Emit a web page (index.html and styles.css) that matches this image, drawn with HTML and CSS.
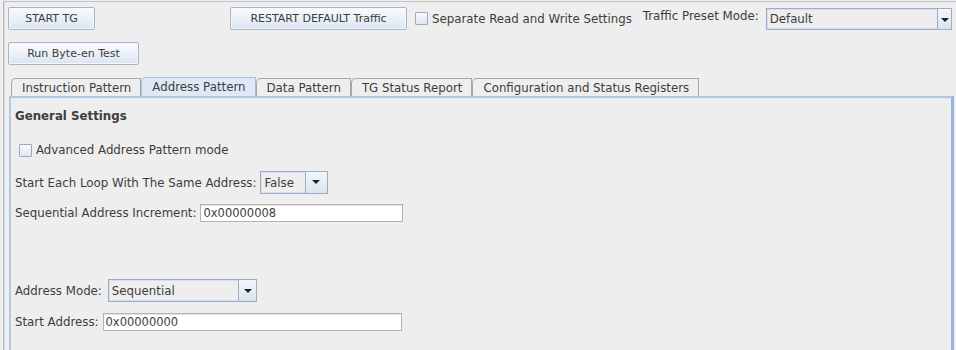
FILE: index.html
```html
<!DOCTYPE html>
<html>
<head>
<meta charset="utf-8">
<link rel="stylesheet" href="styles.css">
</head>
<body>
<div class="frame">
  <div class="toolbar">
    <button class="btn btn-start">START TG</button>
    <button class="btn btn-restart">RESTART DEFAULT Traffic</button>
    <label class="check top-check"><span class="box"></span>Separate Read and Write Settings</label>
    <span class="preset-label">Traffic Preset Mode:</span>
    <div class="combo combo-preset"><span class="combo-text">Default</span><span class="arrow"></span></div>
  </div>
  <div class="toolbar2">
    <button class="btn btn-byte">Run Byte-en Test</button>
  </div>
  <div class="tabs">
    <div class="tab first">Instruction Pattern</div>
    <div class="tab active">Address Pattern</div>
    <div class="tab">Data Pattern</div>
    <div class="tab">TG Status Report</div>
    <div class="tab">Configuration and Status Registers</div>
  </div>
  <div class="panel">
    <div class="heading">General Settings</div>
    <label class="check adv-check"><span class="box"></span>Advanced Address Pattern mode</label>
    <div class="row row-loop">
      <span class="lbl">Start Each Loop With The Same Address:</span>
      <div class="combo combo-false"><span class="combo-text">False</span><span class="arrow"></span></div>
    </div>
    <div class="row row-inc">
      <span class="lbl">Sequential Address Increment:</span>
      <div class="field field-inc">0x00000008</div>
    </div>
    <div class="row row-mode">
      <span class="lbl">Address Mode:</span>
      <div class="combo combo-mode"><span class="combo-text">Sequential</span><span class="arrow"></span></div>
    </div>
    <div class="row row-start">
      <span class="lbl">Start Address:</span>
      <div class="field field-start">0x00000000</div>
    </div>
  </div>
</div>
</body>
</html>
```

FILE: styles.css
```css
* { box-sizing: border-box; }
html, body {
  margin: 0;
  padding: 0;
  background: #eeeeee;
  width: 956px;
  height: 350px;
  overflow: hidden;
  font-family: "DejaVu Sans", sans-serif;
  font-size: 11.8px;
  color: #3d3d3d;
}
.frame {
  margin: 1px 0 0 3px;
  border-top: 1px solid #c4c4c4;
  border-left: 1px solid #b8b8b8;
  box-shadow: inset 1px 0 0 #dcdcdc;
  height: 349px;
  padding: 5px 0 0 4px;
}
.toolbar {
  display: flex;
  align-items: center;
  height: 23px;
  white-space: nowrap;
}
.btn {
  font-family: "DejaVu Sans", sans-serif;
  font-size: 11px;
  color: #3d3d3d;
  height: 23px;
  padding: 0;
  border: 1px solid #a3b5cb;
  border-radius: 2px;
  background: linear-gradient(#fbfcfd, #dae5f1);
  box-shadow: inset 0 0 0 1px #f4f7fb;
}
.btn-start { width: 87px; }
.btn-restart { width: 177px; margin-left: 135px; }
.btn-byte { width: 131px; }
.check {
  display: flex;
  align-items: center;
  white-space: nowrap;
}
.box {
  width: 13px;
  height: 13px;
  border: 1px solid #9aabc0;
  background: linear-gradient(#f7f9fc, #dfe7f0);
  margin-right: 4px;
  border-radius: 1px;
}
.top-check { margin-left: 8px; }
.preset-label {
  margin-left: 11px;
  position: relative;
  top: -3px;
}
.combo {
  display: flex;
  height: 22px;
  border: 1px solid #98adc6;
  background: #eeeeee;
}
.combo-text {
  flex: 1;
  padding-left: 2px;
  display: flex;
  align-items: center;
  border: 1px solid #d6e0ec;
  border-right: none;
  background: #eeeeee;
}
.arrow {
  width: 14px;
  border-left: 1px solid #98adc6;
  background: linear-gradient(#f4f7fb, #d9e4f0);
  position: relative;
}
.arrow::after {
  content: "";
  position: absolute;
  left: 3px;
  top: 9px;
  border-left: 4px solid transparent;
  border-right: 4px solid transparent;
  border-top: 4px solid #222;
}
.combo-preset { width: 186px; margin-left: 7px; }
.toolbar2 {
  margin-top: 12px;
  height: 23px;
}
.tabs {
  display: flex;
  margin-top: 13px;
  margin-left: 3px;
  height: 18px;
  align-items: flex-end;
}
.tab {
  height: 18px;
  padding: 0 9px 0 10px;
  border: 1px solid #a6a6a6;
  border-bottom: none;
  border-radius: 5px 0 0 0;
  background: #eeeeee;
  font-size: 11.8px;
  line-height: 18px;
  color: #3d3d3d;
  margin-right: 0;
  white-space: nowrap;
}
.tab.active {
  background: #dfe8f4;
  border-color: #a9bddb;
  height: 19px;
}
.panel {
  margin-left: 1px;
  width: 945px;
  height: 260px;
  border: 2px solid #b3c7e6;
  border-right: 3px solid #9ab5e0;
  border-bottom: none;
  box-shadow: inset 0 1px 0 #dfe8f4;
  padding: 8px 0 0 4px;
}
.heading {
  font-weight: bold;
  height: 20px;
  line-height: 20px;
}
.adv-check {
  margin-top: 15px;
  margin-left: 4px;
  height: 18px;
}
.row {
  display: flex;
  align-items: center;
  white-space: nowrap;
}
.lbl { margin-right: 4px; }
.row-loop { margin-top: 12px; height: 23px; }
.combo-false { width: 68px; height: 23px; margin-left: 0; }
.combo-false .arrow { width: 22px; }
.combo-false .arrow::after { left: 6px; top: 8px; }
.field {
  height: 18px;
  border: 1px solid #b3b3b3;
  box-shadow: inset 0 1px 0 #e3e3e3;
  background: #ffffff;
  padding-left: 2px;
  line-height: 16px;
  font-size: 11.5px;
}
.row-inc { margin-top: 10px; }
.field-inc { width: 203px; }
.row-mode { margin-top: 57px; height: 23px; }
.combo-mode { width: 149px; height: 23px; margin-left: 2px; }
.combo-mode .arrow { width: 18px; }
.combo-mode .arrow::after { left: 5px; top: 9px; }
.row-start { margin-top: 11px; }
.field-start { width: 299px; }
```
